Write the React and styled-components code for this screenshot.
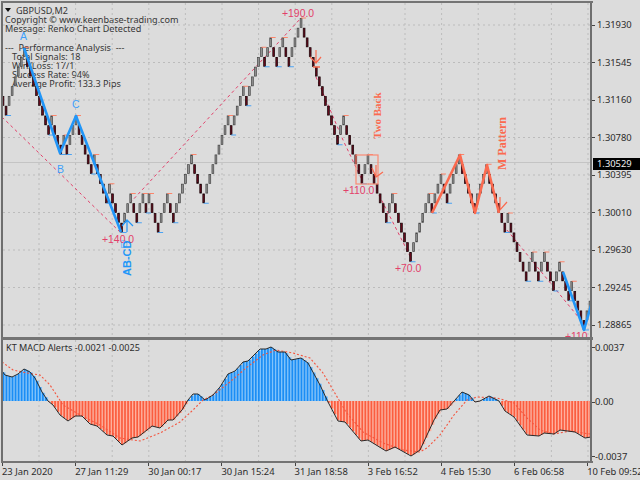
import React from "react";
import styled, { createGlobalStyle } from "styled-components";

const GlobalStyle = createGlobalStyle`
  html, body {
    margin: 0;
    padding: 0;
    background: #dcdcdc;
  }
`;

const Window = styled.div`
  width: 640px;
  height: 480px;
  overflow: hidden;
  box-sizing: border-box;
  padding-top: 1px;
  background: #dcdcdc;
  color: #2c2c2c;
  font-family: "Noto Sans", "Liberation Sans", sans-serif;
  font-size: 9.4px;
`;
const PanelRow = styled.div`
  display: flex;
  height: ${(props) => props.$height}px;
`;
const Pane = styled.div`
  position: relative;
  flex: none;
  width: 587px;
  margin-left: 1px;
  overflow: hidden;
  border-left: 2px solid #6f6f6f;
  border-right: 2px solid #6f6f6f;
  svg {
    display: block;
    position: relative;
  }
`;
const Divider = styled.div`
  width: 592px;
  height: ${(props) => props.$height}px;
  margin-left: 1px;
  background: #747474;
`;
const PriceScale = styled.div`
  flex: 1;
  position: relative;
  padding-top: 3px;
`;
const ScaleRow = styled.div`
  position: relative;
  display: flex;
  align-items: center;
  height: 37.5px;
  padding-left: 5px;
  &::before {
    content: "";
    position: absolute;
    left: 0;
    top: 50%;
    width: 3px;
    height: 1px;
    background: #444;
  }
`;
const CurrentPrice = styled.div`
  position: absolute;
  left: 1px;
  top: 155px;
  width: 44px;
  height: 12px;
  line-height: 12px;
  padding-left: 4px;
  background: #000;
  color: #eee;
`;
const MacdScale = styled.div`
  flex: 1;
  display: flex;
  flex-direction: column;
  justify-content: space-between;
  height: 121px;
  padding-top: 1px;
`;
const MacdRow = styled(ScaleRow)`
  height: 12px;
  padding-left: 3px;
`;
const TimeAxis = styled.div`
  display: flex;
  padding-left: 2px;
`;
const TimeCell = styled.div`
  position: relative;
  flex: none;
  width: 73.15px;
  padding-top: 2px;
  white-space: nowrap;
  &::before {
    content: "";
    position: absolute;
    left: 0;
    top: 0;
    width: 1px;
    height: 3px;
    background: #444;
  }
`;
const Legend = styled.div`
  position: absolute;
  left: 2px;
  top: 2px;
  font-size: 9.1px;
  white-space: pre;
  color: #363636;
`;
const LegendLine = styled.div`
  display: flex;
  align-items: center;
  gap: 4px;
  padding-left: ${(props) => props.$indent || 0}px;
  height: ${(props) => props.$height || 9.1}px;
  line-height: 9.1px;
`;
const Triangle = styled.span`
  width: 0;
  height: 0;
  border-left: 3px solid transparent;
  border-right: 3px solid transparent;
  border-top: 4px solid #111;
  margin-right: 1px;
`;
const MacdTitle = styled.div`
  position: absolute;
  left: 3px;
  top: 2px;
  font-size: 9.1px;
  line-height: 12px;
  white-space: pre;
  z-index: 2;
`;
const ChartLabel = styled.text`
  font-family: ${(props) => (props.$serif ? '"Liberation Serif", serif' : '"Liberation Sans", sans-serif')};
  font-size: ${(props) => props.$size}px;
  font-weight: ${(props) => (props.$bold ? "bold" : "normal")};
  fill: ${(props) => props.$color};
`;

const PINK = "#e2406a";
const BLUE = "#2196f8";
const LIGHT_BLUE = "#3d9ffa";
const CORAL = "#fb6a4f";

// renko walk, run lengths: positive = up bricks, negative = down bricks
const RUNS = [
  -1, 6, -8, 1, -3, 1, -1, 3, -5, 1, -4, 1, -4, 3, -2, 2, -1, 1, -3, 3, -2, 6, -4, 8, -1, 4, -1, 5,
  -1, 2, -2, 2, -2, 4, -12, 2, -6, 2, -6, 2, -6, 6, -1, 3, -2, 4, -5, 4, -6, 1, -6, 2, -2, 2, -3, 2,
  -3, 1, -4, 2,
];
const BRICK = 9.75;
const levelY = (level) => 18 + level * BRICK;

function buildBricks() {
  const steps = [];
  RUNS.forEach((run) => {
    for (let i = 0; i < Math.abs(run); i++) steps.push(run > 0 ? 1 : -1);
  });
  let level = 8;
  const bricks = [{ level, up: false }];
  steps.forEach((step) => {
    level -= step;
    bricks.push({ level, up: step > 0 });
  });
  return bricks;
}
const BRICKS = buildBricks();
const STEP = 587 / (BRICKS.length - 1);
const brickX = (i) => 3 + i * STEP;

const GRID_X = Array.from({ length: 16 }, (_, i) => 39 + i * 36.6);
const GRID_Y = [25, 62.5, 100, 137.5, 175, 212.5, 250, 287.5, 325];

const MACD = [
  [2, 371], [5, 375], [12, 377], [18, 374], [24, 369], [30, 372], [35, 378], [42, 392], [48, 401],
  [53, 405], [60, 415], [68, 421], [75, 416], [82, 416], [90, 424], [97, 426], [107, 435], [113, 436],
  [122, 445], [132, 438], [138, 437], [147, 430], [152, 426], [160, 428], [168, 420], [173, 420],
  [182, 410], [188, 400], [193, 394], [198, 394], [205, 400], [213, 395], [220, 387], [228, 374],
  [235, 371], [243, 362], [248, 361], [260, 349], [266, 349], [271, 347], [278, 352], [285, 352],
  [291, 360], [301, 358], [308, 363], [320, 385], [328, 402], [338, 421], [345, 422], [361, 441],
  [368, 440], [386, 451], [395, 447], [411, 456], [420, 450], [427, 435], [434, 420], [440, 410],
  [447, 409], [455, 400], [462, 392], [469, 395], [475, 402], [480, 401], [489, 396], [499, 401],
  [505, 411], [514, 417], [527, 435], [539, 436], [544, 433], [554, 434], [560, 430], [575, 432],
  [585, 438], [591, 437],
];
const SIGNAL = [
  [2, 362], [13, 370], [27, 373], [40, 375], [50, 385], [63, 405], [80, 415], [100, 425], [120, 438],
  [140, 441], [160, 433], [180, 422], [193, 410], [203, 400], [213, 395], [230, 382], [246, 368],
  [263, 355], [276, 350], [293, 353], [310, 358], [323, 373], [336, 395], [346, 412], [363, 432],
  [383, 443], [403, 450], [420, 452], [427, 448], [440, 435], [454, 415], [467, 400], [477, 397],
  [497, 398], [514, 403], [527, 418], [540, 430], [554, 434], [570, 431], [590, 434],
];
const ZERO = 401;

const toPoints = (list) => list.map((p) => p.join(",")).join(" ");

function macdAt(x) {
  for (let i = 1; i < MACD.length; i++) {
    if (x <= MACD[i][0]) {
      const [x0, y0] = MACD[i - 1];
      const [x1, y1] = MACD[i];
      return y0 + ((y1 - y0) * (x - x0)) / (x1 - x0);
    }
  }
  return MACD[MACD.length - 1][1];
}

function GridLines({ horizontal, top, bottom }) {
  return (
    <g stroke="#bcbcbc" strokeWidth="1" strokeDasharray="2 3">
      {GRID_X.map((x) => (
        <line key={x} x1={x} x2={x} y1={top} y2={bottom} />
      ))}
      {horizontal.map((y) => (
        <line key={y} x1={3} x2={590} y1={y} y2={y} />
      ))}
    </g>
  );
}

function PriceChart() {
  return (
    <svg width="587" height="334" viewBox="3 3 587 334">
      <GridLines horizontal={GRID_Y} top={3} bottom={337} />
      <line x1="3" x2="590" y1="162.5" y2="162.5" stroke="#c4c4c4" strokeWidth="1.2" />

      <g fill="none" stroke={PINK} strokeWidth="1" strokeDasharray="3 3">
        <polyline points="2,117 121,233" />
        <polyline points="130,203 301,18" />
        <polyline points="316,77 326,100 343,140 362,180" />
        <polyline points="379,195 411,258" />
        <polyline points="507,230 584,324" />
      </g>

      <ChartLabel x="20" y="40" $size={10.5} $color={LIGHT_BLUE}>A</ChartLabel>
      <ChartLabel x="57" y="173" $size={10.5} $color={LIGHT_BLUE}>B</ChartLabel>
      <ChartLabel x="72" y="108" $size={10.5} $color={LIGHT_BLUE}>C</ChartLabel>
      <ChartLabel x="120" y="248" $size={10.5} $color="#7dbcf5">D</ChartLabel>

      {BRICKS.map((brick, i) => {
        const x = brickX(i);
        const y = levelY(brick.level);
        const next = BRICKS[i + 1];
        const turn = next && next.up !== brick.up;
        return (
          <g key={i}>
            <rect
              x={x - 0.9}
              y={y + 0.4}
              width="1.8"
              height={BRICK - 0.8}
              fill={brick.up ? "#909090" : "#650a1c"}
              stroke={brick.up ? "#444444" : "#160306"}
              strokeWidth="0.7"
            />
            {turn && (
              <line
                x1={x}
                x2={x + 5}
                y1={brick.up ? y : y + BRICK}
                y2={brick.up ? y : y + BRICK}
                stroke={brick.up ? "#ff7b5e" : "#3b9cf5"}
                strokeWidth="0.9"
              />
            )}
          </g>
        );
      })}

      <rect x="356" y="155" width="22" height="29" fill="none" stroke="#fb8a74" strokeWidth="1.2" />

      <g fill="none" strokeLinejoin="round">
        <polyline points="24,48 60,153 76,116 121,232" stroke={BLUE} strokeWidth="2.6" />
        <polyline points="563,272 584,330 592,302" stroke={BLUE} strokeWidth="2.6" />
        <polyline points="432,213 460,155 475,213 487,165 499,213" stroke={CORAL} strokeWidth="2.6" />
      </g>

      <g fill="none" strokeWidth="1.2">
        <path d="M127 232V220M122 226l5-6 6 6" stroke={BLUE} />
        <path d="M316 50v13M310 57l6 6 5-6" stroke={CORAL} />
        <path d="M376 165v12M372 168l4 9 7-5" stroke={CORAL} />
        <path d="M500 197v13l7-8" stroke={CORAL} />
      </g>
      <line x1="313" x2="320" y1="67" y2="67" stroke={CORAL} strokeWidth="1.5" />

      <ChartLabel x="282" y="17" $size={10.4} $color={PINK}>+190.0</ChartLabel>
      <ChartLabel x="102" y="242.5" $size={10.4} $color={PINK}>+140.0</ChartLabel>
      <ChartLabel x="343" y="194" $size={10.4} $color={PINK}>+110.0</ChartLabel>
      <ChartLabel x="395" y="272" $size={10.4} $color={PINK}>+70.0</ChartLabel>
      <ChartLabel x="565" y="340" $size={10.4} $color={PINK}>+110</ChartLabel>
      <ChartLabel x="131" y="276" transform="rotate(-90 131 276)" $size={11} $bold $color={BLUE}>AB-CD</ChartLabel>
      <ChartLabel x="381" y="139" transform="rotate(-90 381 139)" $size={11} $bold $serif $color={CORAL}>Two Back</ChartLabel>
      <ChartLabel x="506" y="170" transform="rotate(-90 506 170)" $size={12} $bold $serif $color={CORAL}>M Pattern</ChartLabel>
    </svg>
  );
}

function MacdChart() {
  const bars = BRICKS.map((_, i) => brickX(i));
  return (
    <svg width="587" height="121" viewBox="3 340 587 121">
      <GridLines horizontal={[]} top={340} bottom={461} />
      {bars.map((x) => {
        const y = macdAt(x);
        const up = y < ZERO;
        return (
          <g key={x}>
            <rect
              x={x - 0.5}
              y={Math.min(y, ZERO)}
              width={STEP}
              height={Math.abs(y - ZERO)}
              fill={up ? "#80c3fb" : "#ffb09e"}
            />
            <rect
              x={x - 0.5}
              y={Math.min(y, ZERO)}
              width="1.7"
              height={Math.abs(y - ZERO)}
              fill={up ? "#1a8df5" : "#fb5d3f"}
            />
          </g>
        );
      })}
      <polyline points={toPoints(SIGNAL)} fill="none" stroke="#f4553f" strokeWidth="1.1" strokeDasharray="2 2" />
      <polyline points={toPoints(MACD)} fill="none" stroke="#2a2a2a" strokeWidth="1" />
    </svg>
  );
}

const PRICES = ["1.31930", "1.31545", "1.31160", "1.30780", "1.30395", "1.30010", "1.29630", "1.29245", "1.28865"];
const TIMES = [
  "23 Jan 2020", "27 Jan 11:29", "30 Jan 00:17", "30 Jan 15:24", "31 Jan 18:58",
  "3 Feb 16:52", "4 Feb 15:30", "6 Feb 06:58", "10 Feb 09:52",
];

function App() {
  return (
    <Window>
      <GlobalStyle />
      <Divider $height={2} />
      <PanelRow $height={334}>
        <Pane>
          <Legend>
            <LegendLine $height={10.4}>
              <Triangle />
              GBPUSD,M2
            </LegendLine>
            <LegendLine>Copyright © www.keenbase-trading.com</LegendLine>
            <LegendLine>Message: Renko Chart Detected</LegendLine>
            <LegendLine />
            <LegendLine>---  Performance Analysis  ---</LegendLine>
            <LegendLine $indent={7}>Total Signals: 18</LegendLine>
            <LegendLine $indent={7}>Win/Loss: 17/1</LegendLine>
            <LegendLine $indent={7}>Success Rate: 94%</LegendLine>
            <LegendLine $indent={7}>Average Profit: 133.3 Pips</LegendLine>
          </Legend>
          <PriceChart />
        </Pane>
        <PriceScale>
          {PRICES.map((price) => (
            <ScaleRow key={price}>{price}</ScaleRow>
          ))}
          <CurrentPrice>1.30529</CurrentPrice>
        </PriceScale>
      </PanelRow>
      <Divider $height={3} />
      <PanelRow $height={121}>
        <Pane>
          <MacdTitle>KT MACD Alerts -0.0021 -0.0025</MacdTitle>
          <MacdChart />
        </Pane>
        <MacdScale>
          <MacdRow>0.0037</MacdRow>
          <MacdRow>0.00</MacdRow>
          <MacdRow>-0.0037</MacdRow>
        </MacdScale>
      </PanelRow>
      <Divider $height={2} />
      <TimeAxis>
        {TIMES.map((time) => (
          <TimeCell key={time}>{time}</TimeCell>
        ))}
      </TimeAxis>
    </Window>
  );
}

export default App;
